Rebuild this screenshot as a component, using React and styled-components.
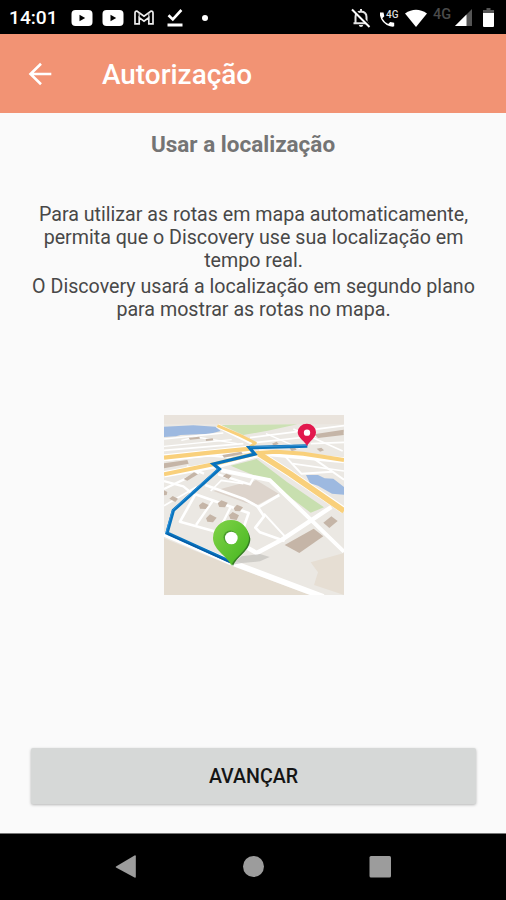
import styled, { createGlobalStyle } from "styled-components";

const GlobalStyle = createGlobalStyle`
  * {
    box-sizing: border-box;
  }

  body {
    margin: 0;
    background-color: #fafafa;
    font-family: Roboto, "Liberation Sans", sans-serif;
  }
`;

const Screen = styled.div`
  display: flex;
  flex-direction: column;
  width: 100%;
  height: 900px;
  background-color: #fafafa;
`;

const StatusBar = styled.div`
  display: flex;
  justify-content: space-between;
  height: 34px;
  padding: 0 12px 0 9px;
  background-color: #000;
`;

const StatusGroup = styled.div`
  display: flex;
  align-items: center;
  height: 35px;
`;

const Clock = styled.span`
  width: 62px;
  color: #fff;
  font-size: 19.2px;
  font-weight: 500;
  line-height: 35px;
`;

const StatusIcon = styled.svg`
  display: block;
  flex: none;
  width: ${(props) => props.$width}px;
  height: ${(props) => props.$height}px;
  margin-left: ${(props) => props.$gap || 0}px;
`;

const Network = styled.span`
  width: 20px;
  margin: -7px 0 0 6px;
  color: #4a4a4a;
  font-size: 14.5px;
  font-weight: 500;
`;

const AppBar = styled.header`
  display: flex;
  align-items: center;
  gap: 50px;
  height: 79px;
  padding: 0 28px;
  background-color: #f29374;
`;

const BackButton = styled.button`
  display: flex;
  width: 24px;
  height: 24px;
  padding: 0;
  border: none;
  background: none;
  color: #fff;
`;

const AppTitle = styled.h1`
  margin: 0;
  padding-top: 3px;
  color: #fff;
  font-size: 27.9px;
  font-weight: 500;
  line-height: 34px;
`;

const Content = styled.main`
  flex: 1;
  display: flex;
  flex-direction: column;
  align-items: center;
  padding: 17px 30px 0 31px;
`;

const Heading = styled.h2`
  margin: 0 0 45px;
  padding-right: 21px;
  color: #747474;
  font-size: 22.5px;
  font-weight: 700;
  line-height: 28px;
`;

const Paragraph = styled.p`
  margin: 0 0 3px;
  color: #484848;
  font-size: 19.65px;
  line-height: 23px;
  text-align: center;
  white-space: nowrap;
`;

const MapPicture = styled.svg`
  display: block;
  width: 180px;
  height: 180px;
  margin: 91px 0 0 1px;
`;

const NextButton = styled.button`
  width: 100%;
  height: 56px;
  margin: auto 0 29px;
  border: none;
  border-radius: 2px;
  background-color: #d6d8d7;
  box-shadow: 0 1px 3px rgba(0, 0, 0, 0.28);
  color: #151515;
  font-family: inherit;
  font-size: 19.6px;
  font-weight: 500;
`;

const NavBar = styled.nav`
  display: flex;
  justify-content: space-between;
  height: 67px;
  padding: 21px 114px 0;
  border-top: 1px solid #777;
  background-color: #000;
`;

const NavIcon = styled.svg`
  width: 24px;
  height: 24px;
  fill: #9c9c9c;
`;

const buildings = [
  "117,281 128,272 146,280 137,292 120,291",
  "173,275 184,266 203,273 195,287 178,286",
  "221,290 231,279 249,287 240,299 225,298",
  "138,320 150,308 170,318 159,332 142,330",
  "207,311 218,301 237,311 230,325 211,322",
  "28,261 38,253 54,261 46,271",
  "188,194 199,186 215,192 206,202",
  "12,236 22,241 20,250 12,251",
  "71,202 102,182 114,188 82,207",
  "187,130 244,120 248,127 192,138",
  "12,155 82,145 86,156 12,170",
  "374,400 461,351 490,374 418,424",
  "490,333 514,314 533,328 508,349",
  "462,68 551,54 551,70 474,79",
  "388,108 403,106 410,114 395,118",
  "470,111 484,108 492,116 480,120",
  "336,96 350,90 356,97 342,102",
  "86,78 118,75 120,81 90,84",
  "137,82 158,80 160,86 138,88",
];

function VideoIcon({ gap }) {
  return (
    <StatusIcon $width={22} $height={16} $gap={gap} viewBox="0 0 22 16">
      <rect x="0.5" width="21" height="16" rx="4" fill="#fff" />
      <path d="M8.5 4.7 14.2 8l-5.7 3.3z" fill="#000" />
    </StatusIcon>
  );
}

function RouteMap() {
  return (
    <MapPicture viewBox="12 10 540 540">
      <defs>
        <linearGradient id="greenPin" x1="0" y1="0" x2="1" y2="1">
          <stop offset="0.1" stopColor="#7bd044" />
          <stop offset="1" stopColor="#43b51e" />
        </linearGradient>
      </defs>
      <rect x="12" y="10" width="540" height="540" fill="#ebe8e3" />
      <path d="M12 10H552V38H12z" fill="#e9e3dc" />

      {/* ground */}
      <path d="M12 380 214 462 450 550H12z" fill="#e4dcd0" />
      <path d="M552 424 452 452 474 482 462 520 552 550z" fill="#e6ded3" />
      <path d="M160 238 240 216 262 219 288 205 356 246 292 280 258 274 216 258z" fill="#ddd4cc" />

      {/* parks and water */}
      <path d="M184 40 412 38 330 56 250 70z" fill="#cce1b4" />
      <path d="M212 162 290 142 382 212 492 287 452 303 330 211z" fill="#c8dfaf" />
      <path d="M12 45 100 41 166 45 182 58 150 66 62 70 48 74 12 76z" fill="#9db9e0" />

      {/* streets */}
      <g fill="none" stroke="#fff" strokeWidth="7" strokeLinejoin="round">
        <path d="M12 82 190 64" strokeWidth="5" />
        <path d="M12 104 215 84" strokeWidth="4" />
        <path d="M12 116 250 96" strokeWidth="5" />
        <path d="M64 86 108 76 232 96" strokeWidth="4" />
        <path d="M270 78 552 42" strokeWidth="5" />
        <path d="M284 93 552 64" strokeWidth="5" />
        <path d="M400 52 548 118" strokeWidth="5" />
        <path d="M318 66 420 110" strokeWidth="4" />
        <path d="M452 96 552 92" strokeWidth="5" />
        <path d="M370 128 424 186 516 180" strokeWidth="6" />
        <path d="M440 126 552 204" strokeWidth="6" />
        <path d="M398 156 552 178" strokeWidth="5" />
        <path d="M12 146 144 132 240 140" strokeWidth="5" />
        <path d="M80 164 132 186" />
        <path d="M12 208 70 224 102 250" />
        <path d="M12 232 116 182" />
        <path d="M12 282 110 225" strokeWidth="5" />
        <path d="M184 176 330 206 552 420" strokeWidth="12" />
        <path d="M174 188 270 218 282 196" />
        <path d="M136 220 252 262 296 286 358 250" strokeWidth="8" />
        <path d="M152 238 184 206 250 216" strokeWidth="5" />
        <path d="M106 248 266 304 250 350" strokeWidth="8" />
        <path d="M106 248 60 330 190 366" strokeWidth="8" />
        <path d="M158 268 108 340" />
        <path d="M212 286 174 362" />
        <path d="M292 284 312 314 286 348 300 362 374 388" strokeWidth="8" />
        <path d="M312 306 378 378" strokeWidth="6" />
        <path d="M514 286 366 384 290 424 262 408" strokeWidth="13" />
        <path d="M12 366 214 452 490 556" strokeWidth="17" />
      </g>
      <path d="M438 190 474 190 494 200 520 201 552 226V249L516 246 474 222 450 215z" fill="#9db9e0" />

      {/* avenues */}
      <g fill="none" stroke="#fff" strokeLinejoin="round">
        <path d="M12 138 270 112" strokeWidth="21" />
        <path d="M12 188 180 158 296 126" strokeWidth="20" />
        <path d="M172 42 286 98" strokeWidth="13" />
        <path d="M296 122 552 146" strokeWidth="18" />
        <path d="M296 126 390 186 552 296" strokeWidth="22" />
      </g>
      <g fill="none" stroke="#f9d07b" strokeLinejoin="round">
        <path d="M12 138 150 123 272 111" strokeWidth="13" />
        <path d="M12 188 160 158 292 124" strokeWidth="12" />
        <path d="M172 42 240 71 286 94 262 112" strokeWidth="9" />
        <path d="M290 124 350 120 430 126 552 145" strokeWidth="12" />
        <path d="M296 126 390 186 552 298" strokeWidth="17" />
      </g>

      {buildings.map((points) => (
        <polygon key={points} points={points} fill="#c5b5a7" />
      ))}

      {/* route */}
      <g fill="none" strokeLinejoin="miter">
        <path
          d="M442 103 268 108 284 127 160 157 178 172 40 296 21 364 212 450"
          stroke="#0873bd"
          strokeWidth="10"
        />
        <path d="M442 101 270 106" stroke="#3d92cf" strokeWidth="3" />
        <path d="M174 171 37 296 18 362" stroke="#2b91dc" strokeWidth="3" />
        <path d="M22 367 212 453" stroke="#075aa5" strokeWidth="4" />
      </g>

      {/* pins */}
      <path d="M214 460 245 434 300 427 329 436 300 449 246 454z" fill="#b8b6b2" opacity="0.55" />
      <path
        d="M219 463C211 437 164 417 164 381a54 54 0 0 1 107 0C271 418 229 435 219 463z"
        fill="#367d24"
      />
      <path
        d="M214 462C206 436 159 416 159 379a54 54 0 0 1 108 0C267 416 223 435 214 462z"
        fill="url(#greenPin)"
      />
      <circle cx="211" cy="377" r="20.5" fill="#4a9e2c" />
      <circle cx="214" cy="379" r="19" fill="#fff" />
      <path
        d="M441 104C437 90 413 79 413 62a27 25 0 0 1 55 0C468 79 446 90 441 104z"
        fill="#e2184d"
      />
      <circle cx="441" cy="63" r="9.5" fill="#fff" />
    </MapPicture>
  );
}

export default function App() {
  return (
    <>
      <GlobalStyle />
      <Screen>
        <StatusBar>
          <StatusGroup>
            <Clock>14:01</Clock>
            <VideoIcon />
            <VideoIcon gap={9} />
            <StatusIcon $width={20} $height={15} $gap={10} viewBox="0 0 20 15">
              <path
                d="M1 13.8V3Q1 .9 3.2 1.2L10 6.3l6.800-5.100Q19 .9 19 3v10.800h-4.200V7.600L10 11.200 5.200 7.600v6.200z"
                fill="none"
                stroke="#eee"
                strokeWidth="1.7"
              />
              <path d="M5.2 7.6V3M14.8 7.6V3" stroke="#ccc" strokeWidth="1.2" />
            </StatusIcon>
            <StatusIcon $width={16} $height={18} $gap={13} viewBox="0 0 16 18">
              <path d="M1.5 6.2 5.8 10.4 14.4 1" fill="none" stroke="#fff" strokeWidth="2.6" />
              <path d="M0.5 16H15.5" stroke="#fff" strokeWidth="3" />
            </StatusIcon>
            <StatusIcon $width={6} $height={6} $gap={19} viewBox="0 0 6 6">
              <circle cx="3" cy="3" r="3" fill="#fff" />
            </StatusIcon>
          </StatusGroup>
          <StatusGroup>
            <StatusIcon $width={20} $height={20} viewBox="0 0 20 20">
              <path
                d="M4.5 14.5V9q0-5 5.5-5.5 5.5.5 5.5 5.5v5.5M2.5 15.2h15M10 1v2.5"
                fill="none"
                stroke="#e4e4e4"
                strokeWidth="2"
              />
              <path d="M7.8 17h4.4q-.3 2-2.2 2t-2.2-2z" fill="#e4e4e4" />
              <path d="M2.6 1 20 18.4" stroke="#000" strokeWidth="2" />
              <path d="M1 1.5 18.5 19" stroke="#fff" strokeWidth="2" />
            </StatusIcon>
            <StatusIcon $width={20} $height={20} $gap={8} viewBox="0 0 20 20">
              <path
                d="M1 4.5h3.5l.8 3.7-2 2q2 3.900 5.900 5.700l2-2 4 .8v3.600Q14 19 11 18.300 2.500 15.500 1 7.500z"
                fill="#fff"
              />
              <text x="7" y="9.5" fill="#ddd" fontSize="10.5" fontWeight="500" textLength="12.5" lengthAdjust="spacingAndGlyphs">
                4G
              </text>
            </StatusIcon>
            <StatusIcon $width={22} $height={18} $gap={6} viewBox="0 0 22 18">
              <path d="M0 4.5Q11-3 22 4.500L11 18z" fill="#fff" />
            </StatusIcon>
            <Network>4G</Network>
            <StatusIcon $width={17} $height={17} $gap={2} viewBox="0 0 17 17">
              <path d="M0 17 17 0v17z" fill="#555" />
              <path d="M0 17 11.5 5.5V17z" fill="#fff" />
            </StatusIcon>
            <StatusIcon $width={11} $height={19} $gap={11} viewBox="0 0 11 19">
              <path d="M3.5 0h4v2H11v4H0V2h3.5z" fill="#555" />
              <path d="M0 5h11v13q0 1-1 1H1q-1 0-1-1z" fill="#fff" />
            </StatusIcon>
          </StatusGroup>
        </StatusBar>

        <AppBar>
          <BackButton aria-label="Voltar">
            <svg width="24" height="24" viewBox="0 0 24 24" fill="none" stroke="currentColor" strokeWidth="2.6">
              <path d="M23.3 12H3M13 1.800 2.500 12 13 22.200" />
            </svg>
          </BackButton>
          <AppTitle>Autorização</AppTitle>
        </AppBar>

        <Content>
          <Heading>Usar a localização</Heading>
          <Paragraph>
            Para utilizar as rotas em mapa automaticamente,
            <br />
            permita que o Discovery use sua localização em
            <br />
            tempo real.
          </Paragraph>
          <Paragraph>
            O Discovery usará a localização em segundo plano
            <br />
            para mostrar as rotas no mapa.
          </Paragraph>
          <RouteMap />
          <NextButton>AVANÇAR</NextButton>
        </Content>

        <NavBar>
          <NavIcon viewBox="0 0 24 24">
            <path d="M2 11.5 20.5.5q1.300-.5 1.300.8v20.400q0 1.300-1.300.8L2 12.500q-.7-.5 0-1z" />
          </NavIcon>
          <NavIcon viewBox="0 0 24 24">
            <circle cx="12.5" cy="11.5" r="10.5" />
          </NavIcon>
          <NavIcon viewBox="0 0 24 24">
            <rect x="1.5" y="1" width="21.5" height="21.5" rx="1.5" />
          </NavIcon>
        </NavBar>
      </Screen>
    </>
  );
}
